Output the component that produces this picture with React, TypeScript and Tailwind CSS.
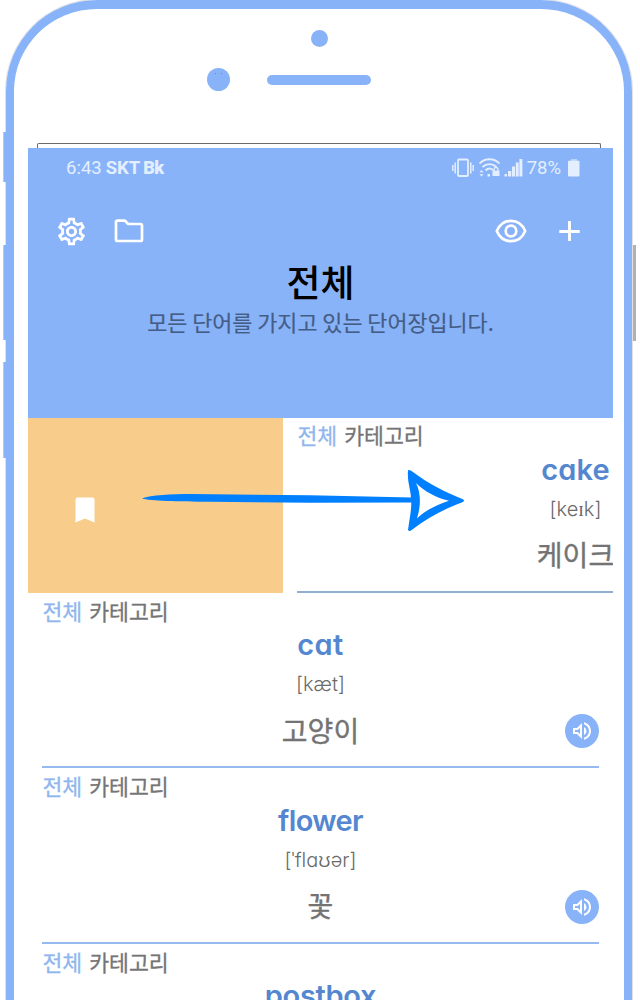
import { MdOutlineSettings, MdOutlineVolumeUp } from "react-icons/md";

type Entry = { word: string; phonetic: string; meaning: string; spacing: string };

const cake: Entry = { word: "cake", phonetic: "[keɪk]", meaning: "케이크", spacing: "tracking-[0.1px]" };
const entries: Entry[] = [
  { word: "cat", phonetic: "[kæt]", meaning: "고양이", spacing: "tracking-[0.4px]" },
  { word: "flower", phonetic: "[ˈflaʊər]", meaning: "꽃", spacing: "tracking-[-0.6px]" },
  { word: "postbox", phonetic: "[ˈpoʊstbɑːks]", meaning: "우체통", spacing: "tracking-[-0.3px]" },
];

function WordCard({ entry, lineColor, audio }: { entry: Entry; lineColor: string; audio?: boolean }) {
  return (
    <div className="w-[585px] h-[175.5px] shrink-0 px-[14px]">
      <div className={`relative flex h-[175px] flex-col border-b-2 ${lineColor}`}>
        <div className="flex h-[35px] items-center gap-[7px] pl-[0.5px] text-[21.6px] leading-none text-[#757575] [-webkit-text-stroke:0.3px]">
          <span className="text-[#8fb6ee]">전체</span>
          <span>카테고리</span>
        </div>
        <div className={`flex h-[33px] items-center justify-center font-['Inter'] text-[29px] font-semibold leading-none text-[#5487d0] [font-feature-settings:'cv11'] ${entry.spacing}`}>
          {entry.word}
        </div>
        <div className="flex h-[46px] items-center justify-center font-['Inter'] text-[20px] font-light leading-none text-[#6a6a6a] [font-feature-settings:'cv11']">
          {entry.phonetic}
        </div>
        <div className="flex h-[45px] items-center justify-center text-[28px] leading-none text-[#737373] [-webkit-text-stroke:0.4px]">{entry.meaning}</div>
        {audio && (
          <div className="absolute right-[0.5px] top-[121px] flex size-[34px] items-center justify-center rounded-full bg-[#89b3f8] text-white">
            <MdOutlineVolumeUp size={24} />
          </div>
        )}
      </div>
    </div>
  );
}

function StatusBar() {
  return (
    <div className="flex h-10 items-center justify-between pl-[38px] pr-[33px] font-['Roboto'] text-[18.5px] leading-none text-[#e3eefe]">
      <div className="flex items-center">
        <span>6:43</span>
        <span className="ml-[4px] font-bold">SKT</span>
        <span className="ml-[3px] text-[18px] font-black tracking-[-0.7px]">Bk</span>
      </div>
      <div className="flex items-center">
        <svg width="22" height="20" viewBox="0 0 22 20" fill="none" stroke="currentColor">
          <rect x="6" y="1.5" width="10" height="16.5" rx="1" strokeWidth="1.8" />
          <path d="M3.2 4.5v11M.8 7v6M18.8 4.5v11M21.2 7v6" strokeWidth="1.5" />
        </svg>
        <svg className="ml-[5px]" width="21" height="20" viewBox="0 0 21 20" fill="none" stroke="currentColor">
          <path d="M.5 5.5C6-.2 15-.2 20.5 5.5M3.5 9c4-3.8 10-3.8 14 0M6.5 12.5c2-2 5-2.5 7.5-.5" strokeWidth="1.9" />
          <path d="M15 13v-1.5a2 2 0 0 1 4 0V13" strokeWidth="1.3" />
          <path d="M13.5 12.5h7V18h-7zM8.5 16h2.5v2.5H8.5zM.5 14.2 2.5 12l2 2.2zM.5 16.3l2 2.2 2-2.2z" fill="currentColor" stroke="none" />
        </svg>
        <svg className="ml-[4px]" width="19" height="20" viewBox="0 0 19 20" fill="currentColor">
          <path d="M.5 16h2.5v2.5H.5zM4 13h3.3v5.5h-3.3zM8 8.5h3v10h-3zM11.8 4.5h2.9v14h-2.9zM15.4 1H18.4v17.5h-3z" />
        </svg>
        <span className="ml-[4px]">78%</span>
        <svg className="ml-[7px]" width="12" height="20" viewBox="0 0 12 20" fill="currentColor">
          <path d="M3 1h6v2H3z" opacity=".55" />
          <rect y="2.8" width="11.5" height="15.7" rx="1" />
        </svg>
      </div>
    </div>
  );
}

function FolderIcon() {
  return (
    <svg width="30" height="24" viewBox="0 0 30 24" fill="none" stroke="currentColor" strokeWidth="2.7" strokeLinejoin="round">
      <path d="M3.5 1.7H11L14.2 5H26.5Q28 5 28 6.5V20.5Q28 22 26.5 22H3.5Q2 22 2 20.5V3.2Q2 1.7 3.5 1.7Z" />
    </svg>
  );
}

function EyeIcon() {
  return (
    <svg width="32" height="24" viewBox="0 0 32 24" fill="none" stroke="currentColor" strokeWidth="2.7">
      <path d="M1.8 12C4.5 5.5 10 1.8 16 1.8S27.5 5.5 30.2 12C27.5 18.5 22 22.2 16 22.2S4.5 18.5 1.8 12Z" strokeLinejoin="round" />
      <circle cx="16" cy="12" r="5.3" />
    </svg>
  );
}

export default function App() {
  return (
    <div className="relative h-[1000px] w-[640px] overflow-hidden bg-white font-['Noto_Sans_CJK_KR',sans-serif]">
      <div className="ml-[6px] h-[1100px] w-[626px] rounded-t-[91px] border-x-8 border-t-[9px] border-[#89b3f8] shadow-[0_0_0_1px_#e3e1e6]">
        <div className="flex h-[134px] flex-col">
          <div className="ml-[296.5px] mt-[20.5px] size-[17px] shrink-0 rounded-full bg-[#89b3f8]" />
          <div className="ml-[193px] mt-[21px] flex items-center gap-[37px]">
            <div className="flex size-[23px] justify-center gap-[5px] rounded-full bg-[#89b3f8] pt-[5px]">
              <span className="size-px bg-[#6687bd]" />
              <span className="size-px bg-[#6687bd]" />
            </div>
            <div className="mt-[1px] h-[10px] w-[104px] rounded-full bg-[#89b3f8]" />
          </div>
        </div>
        <div className="ml-[23px] h-[5px] w-[564px] rounded-t-[2px] border-x border-t border-[#6a6a6a]" />
        <main className="ml-[14px] w-[585px] overflow-hidden">
          <header className="h-[269.5px] bg-[#89b3f8]">
            <StatusBar />
            <nav className="flex h-[86px] items-center justify-between pl-[27px] pr-[33px] text-white">
              <div className="flex items-center gap-[26px]">
                <MdOutlineSettings size={33} />
                <FolderIcon />
              </div>
              <div className="flex items-center gap-[32px]">
                <EyeIcon />
                <svg width="21" height="22" viewBox="0 0 21 22" fill="none" stroke="currentColor" strokeWidth="2.9">
                  <path d="M10.5 1v20M.3 11.5h20.4" />
                </svg>
              </div>
            </nav>
            <h1 className="-mt-[12px] text-center text-[37px] font-medium leading-[38px] text-black">전체</h1>
            <p className="mt-[9px] text-center text-[21.8px] leading-[26px] text-[#445d86] [-webkit-text-stroke:0.2px]">모든 단어를 가지고 있는 단어장입니다.</p>
          </header>
          <div className="flex h-[175.5px]">
            <div className="flex w-[255px] shrink-0 items-center bg-[#f8cd8b] pl-[43px] pt-[9px] text-white">
              <svg width="28" height="34" viewBox="0 0 28 34" fill="currentColor">
                <path d="M6.5 4.5H21.5Q23.5 4.5 23.5 6.5V29.5L14 25.5 4.5 29.5V6.5Q4.5 4.5 6.5 4.5Z" />
              </svg>
            </div>
            <WordCard entry={cake} lineColor="border-[#91afd1]" />
          </div>
          {entries.map((entry) => (
            <WordCard key={entry.word} entry={entry} lineColor="border-[#96b9ef]" audio />
          ))}
        </main>
      </div>
      <div className="absolute left-[3px] top-[132px] h-[50px] w-[3px] border-l border-[#c3cad6] bg-[#89b3f8]" />
      <div className="absolute left-[3px] top-[245px] h-[95px] w-[3px] border-l border-[#c3cad6] bg-[#89b3f8]" />
      <div className="absolute left-[3px] top-[362px] h-[96px] w-[3px] border-l border-[#c3cad6] bg-[#89b3f8]" />
      <div className="absolute left-[633px] top-[245px] h-[96px] w-[3px] bg-[#b1b1b1]" />
      <svg className="absolute left-[140px] top-[465px]" width="330" height="72" viewBox="140 465 330 72" fill="#0080ff">
        <path d="M142 498.5C151 495 171 494.2 191 494L310 495.2 412 497.5V502.5L310 502.8 210 501.8C177 501.5 150 501 142 498.5Z" />
        <path fillRule="evenodd" d="M408 470.2Q410 469.5 413 472C429 484 443 491 463 499.2Q465 500.5 463 502C446 508 427 518 411 530.5Q409 531.5 408 530C410 516 412 507 411 499C411 490 407 482 408 470.2ZM416 483C421 493 421 506 417 518.5C424 511 436 505 449 500.7C436 498 424 491 416 483Z" />
      </svg>
    </div>
  );
}
